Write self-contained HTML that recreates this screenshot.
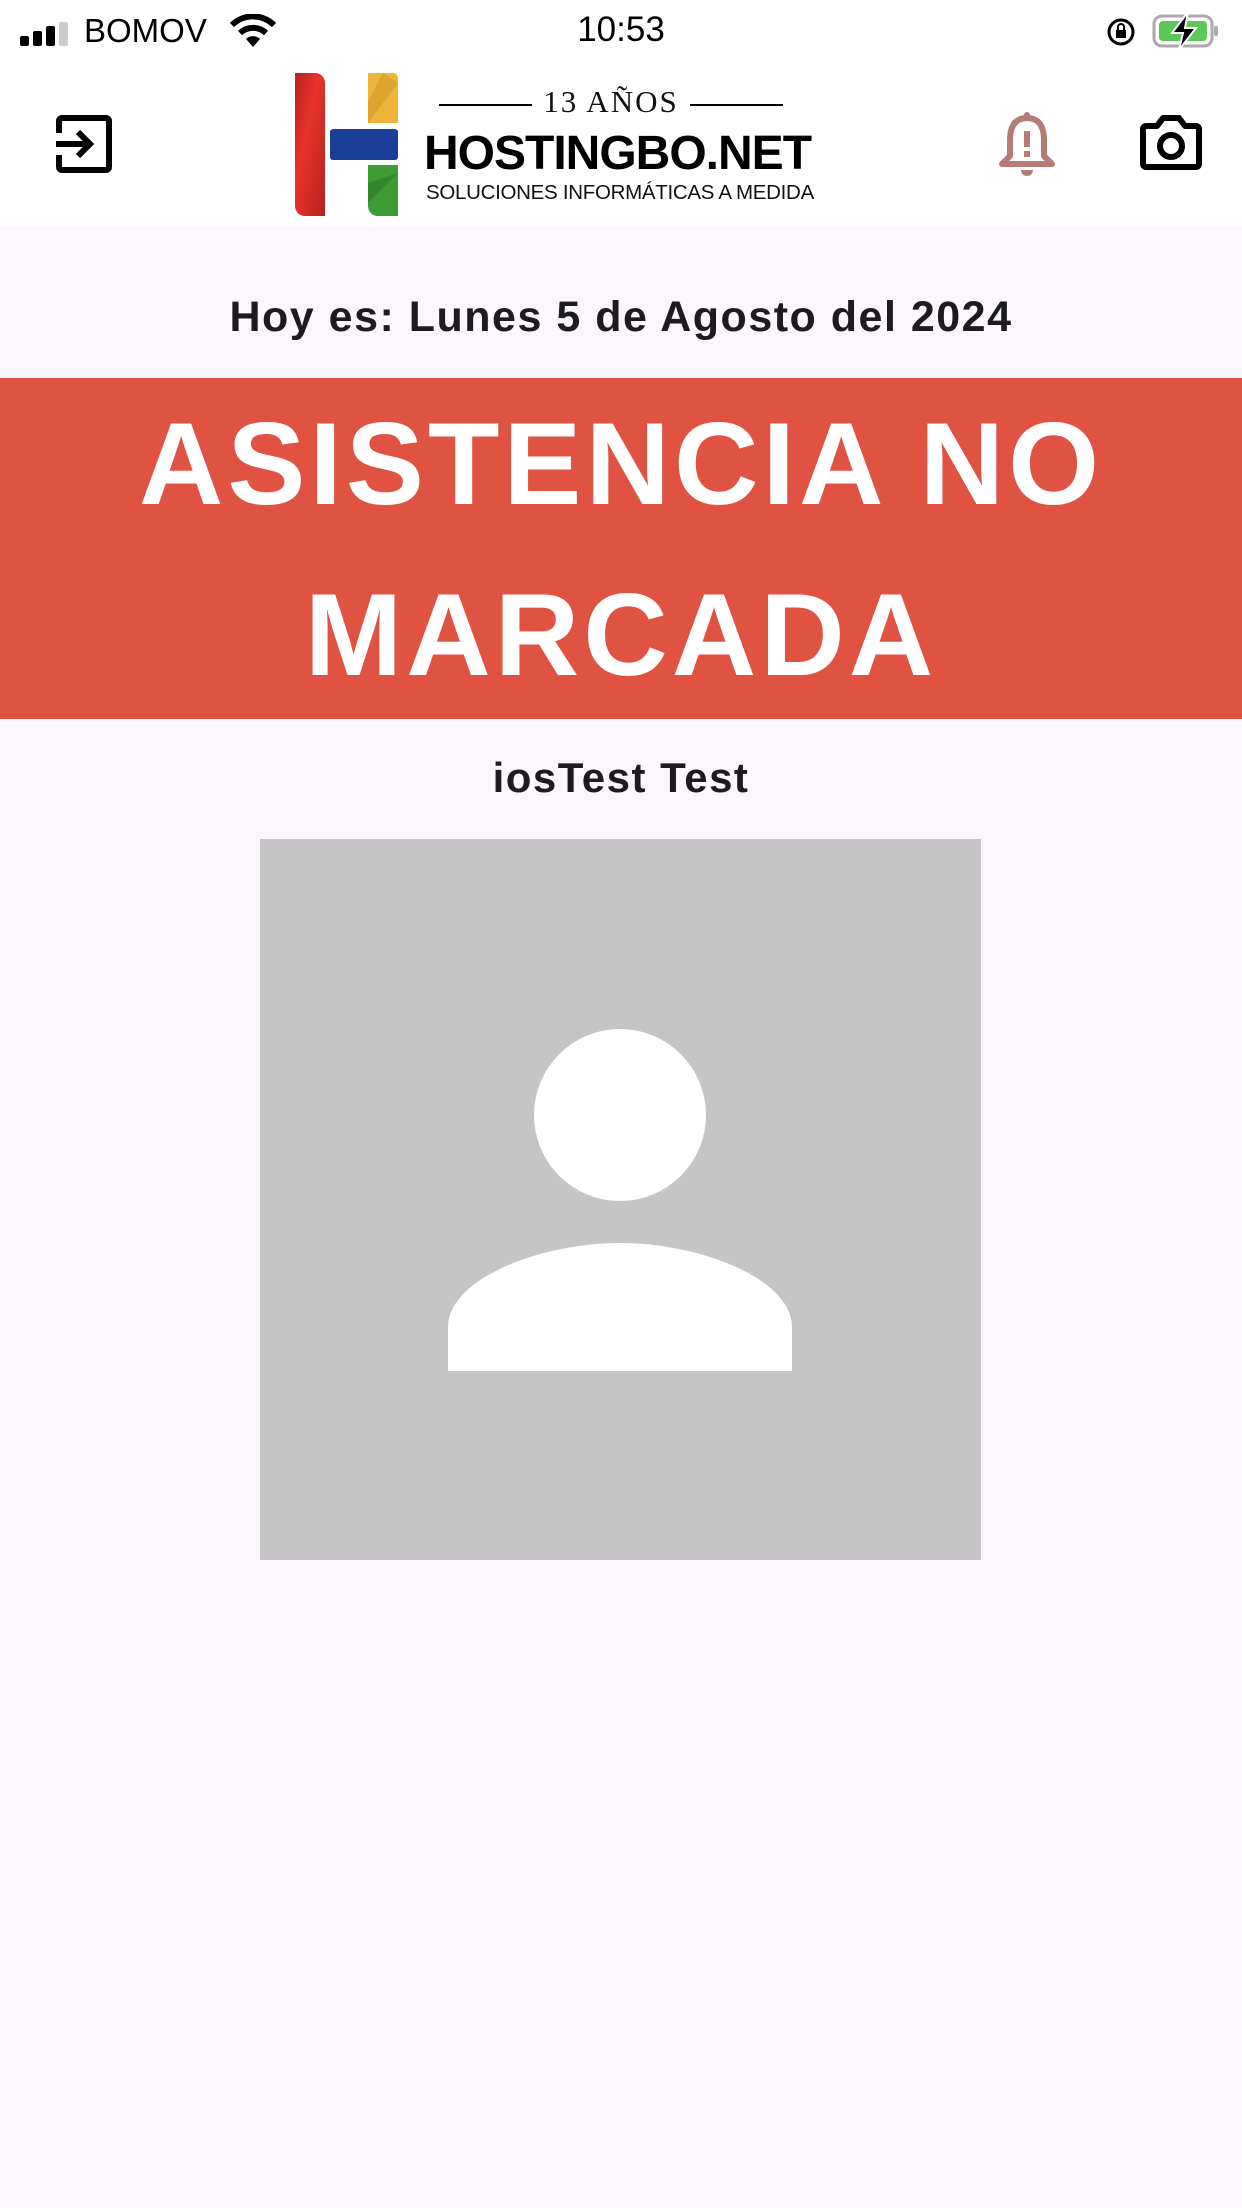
<!DOCTYPE html>
<html><head><meta charset="utf-8"><style>
*{margin:0;padding:0;box-sizing:border-box}
body{width:1242px;height:2208px;background:#fbf6fc;font-family:"Liberation Sans",sans-serif;position:relative;overflow:hidden;color:#1c1b1f}
.abs{position:absolute}
#hdr{left:0;top:0;width:1242px;height:227px;background:#fff}
.c{left:0;width:1242px;text-align:center}
</style></head><body>
<div id="hdr" class="abs"></div>
<!-- status bar -->
<div class="abs" style="left:20px;top:22px">
<svg width="52" height="26"><rect x="0" y="14" width="9" height="10" rx="2" fill="#000"/><rect x="13" y="9" width="9" height="15" rx="2" fill="#000"/><rect x="26" y="4" width="9" height="20" rx="2" fill="#000"/><rect x="39" y="0" width="9" height="24" rx="2" fill="#ccc"/></svg></div>
<div class="abs" style="left:84px;top:12px;font-size:33px;color:#000">BOMOV</div>
<svg class="abs" style="left:230px;top:14px" width="46" height="34" viewBox="0 0 46 34"><path d="M2 11 A30 30 0 0 1 44 11" stroke="#000" stroke-width="6" fill="none"/><path d="M10 19 A19 19 0 0 1 36 19" stroke="#000" stroke-width="6" fill="none"/><path d="M23 33 L16 25 A10 10 0 0 1 30 25 Z" fill="#000"/></svg>
<div class="abs c" style="top:10px;font-size:35px;color:#000">10:53</div>
<svg class="abs" style="left:1106px;top:17px" width="30" height="30"><circle cx="15" cy="15" r="12" stroke="#000" stroke-width="3" fill="none"/><rect x="10" y="13" width="10" height="8" fill="#000"/><path d="M12 13 V10 A3 3 0 0 1 18 10 V13" stroke="#000" stroke-width="2" fill="none"/></svg>
<svg class="abs" style="left:1152px;top:12px" width="70" height="38"><rect x="2" y="4" width="58" height="30" rx="8" stroke="#aaa" stroke-width="3" fill="none"/><rect x="7" y="9" width="48" height="20" rx="4" fill="#5cc85c"/><rect x="62" y="14" width="4" height="10" rx="2" fill="#aaa"/><path d="M36 0 L20 21 H31 L27 38 L44 16 H33 Z" fill="#000" stroke="#fff" stroke-width="2"/></svg>
<!-- exit icon -->
<svg class="abs" style="left:54px;top:115px" width="60" height="58" viewBox="0 0 60 58"><path d="M5 18 V6 A3 3 0 0 1 8 3 H52 A3 3 0 0 1 55 6 V52 A3 3 0 0 1 52 55 H8 A3 3 0 0 1 5 52 V40" stroke="#000" stroke-width="6" fill="none"/><path d="M2 29 H36 M24 17 L36 29 L24 41" stroke="#000" stroke-width="6" fill="none"/></svg>
<!-- logo -->
<svg class="abs" style="left:295px;top:73px" width="110" height="145"><defs><linearGradient id="r" x1="0" y1="0" x2="1" y2="1"><stop offset="0" stop-color="#b8201f"/><stop offset=".4" stop-color="#e8332b"/><stop offset="1" stop-color="#b5221d"/></linearGradient></defs><path d="M0 0 H20 A10 10 0 0 1 30 10 V143 H10 A10 10 0 0 1 0 133 Z" fill="url(#r)"/><path d="M73 0 H98 A5 5 0 0 1 103 5 V50 H73 Z" fill="#f0b43a"/><path d="M88 0 L73 28 V50 L103 10 Z" fill="#d49a2a" opacity=".6"/><rect x="35" y="56" width="68" height="31" rx="3" fill="#1a3f98"/><path d="M73 92 H103 V143 H83 A10 10 0 0 1 73 133 Z" fill="#3e9c35"/><path d="M103 100 L73 130 V110 Z" fill="#2f7d28" opacity=".7"/></svg>
<div class="abs" style="left:439px;top:104px;width:93px;height:2px;background:#000"></div>
<div class="abs" style="left:690px;top:104px;width:93px;height:2px;background:#000"></div>
<div class="abs" style="left:532px;top:84px;width:158px;text-align:center;font-family:'Liberation Serif',serif;font-size:31px;letter-spacing:2px;color:#111">13 AÑOS</div>
<div class="abs" style="left:424px;top:126px;font-size:48px;font-weight:bold;color:#000;letter-spacing:-1px">HOSTINGBO.NET</div>
<div class="abs" style="left:426px;top:181px;font-size:20.5px;color:#111;letter-spacing:-0.3px">SOLUCIONES INFORMÁTICAS A MEDIDA</div>
<!-- bell -->
<svg class="abs" style="left:998px;top:112px" width="58" height="66" viewBox="0 0 58 66"><path d="M29 6 C16 6 12 16 12 28 V44 L4 52 H54 L46 44 V28 C46 16 42 6 29 6 Z" stroke="#b57b74" stroke-width="6" fill="none" stroke-linejoin="round"/><rect x="26" y="0" width="6" height="8" rx="3" fill="#b57b74"/><rect x="26" y="19" width="6" height="16" fill="#b57b74"/><rect x="26" y="39" width="6" height="6" fill="#b57b74"/><path d="M23 58 A6 6 0 0 0 35 58 Z" fill="#b57b74"/></svg>
<!-- camera -->
<svg class="abs" style="left:1140px;top:114px" width="62" height="56" viewBox="0 0 62 56"><path d="M6 12 H17 L23 4 H39 L45 12 H56 A3 3 0 0 1 59 15 V50 A3 3 0 0 1 56 53 H6 A3 3 0 0 1 3 50 V15 A3 3 0 0 1 6 12 Z" stroke="#000" stroke-width="6" fill="none" stroke-linejoin="round"/><circle cx="31" cy="32" r="11" stroke="#000" stroke-width="6" fill="none"/></svg>
<!-- date -->
<div class="abs c" style="top:293px;font-size:43px;font-weight:bold;letter-spacing:1.5px">Hoy es: Lunes 5 de Agosto del 2024</div>
<!-- banner -->
<div class="abs" style="left:0;top:378px;width:1242px;height:341px;background:#e05242"></div>
<div class="abs c" style="top:397px;font-size:117px;font-weight:bold;color:#fff;letter-spacing:4px;line-height:134px">ASISTENCIA NO</div>
<div class="abs c" style="top:568px;font-size:117px;font-weight:bold;color:#fff;letter-spacing:4px;line-height:134px">MARCADA</div>
<div class="abs c" style="top:754px;font-size:42px;font-weight:bold;letter-spacing:1.5px">iosTest Test</div>
<!-- avatar -->
<div class="abs" style="left:260px;top:839px;width:721px;height:721px;background:#c5c5c5"></div>
<svg class="abs" style="left:260px;top:839px" width="721" height="721"><circle cx="360" cy="276" r="86" fill="#fff"/><path d="M188 532 V488 C188 440 280 404 360 404 C440 404 532 440 532 488 V532 Z" fill="#fff"/></svg>
</body></html>
